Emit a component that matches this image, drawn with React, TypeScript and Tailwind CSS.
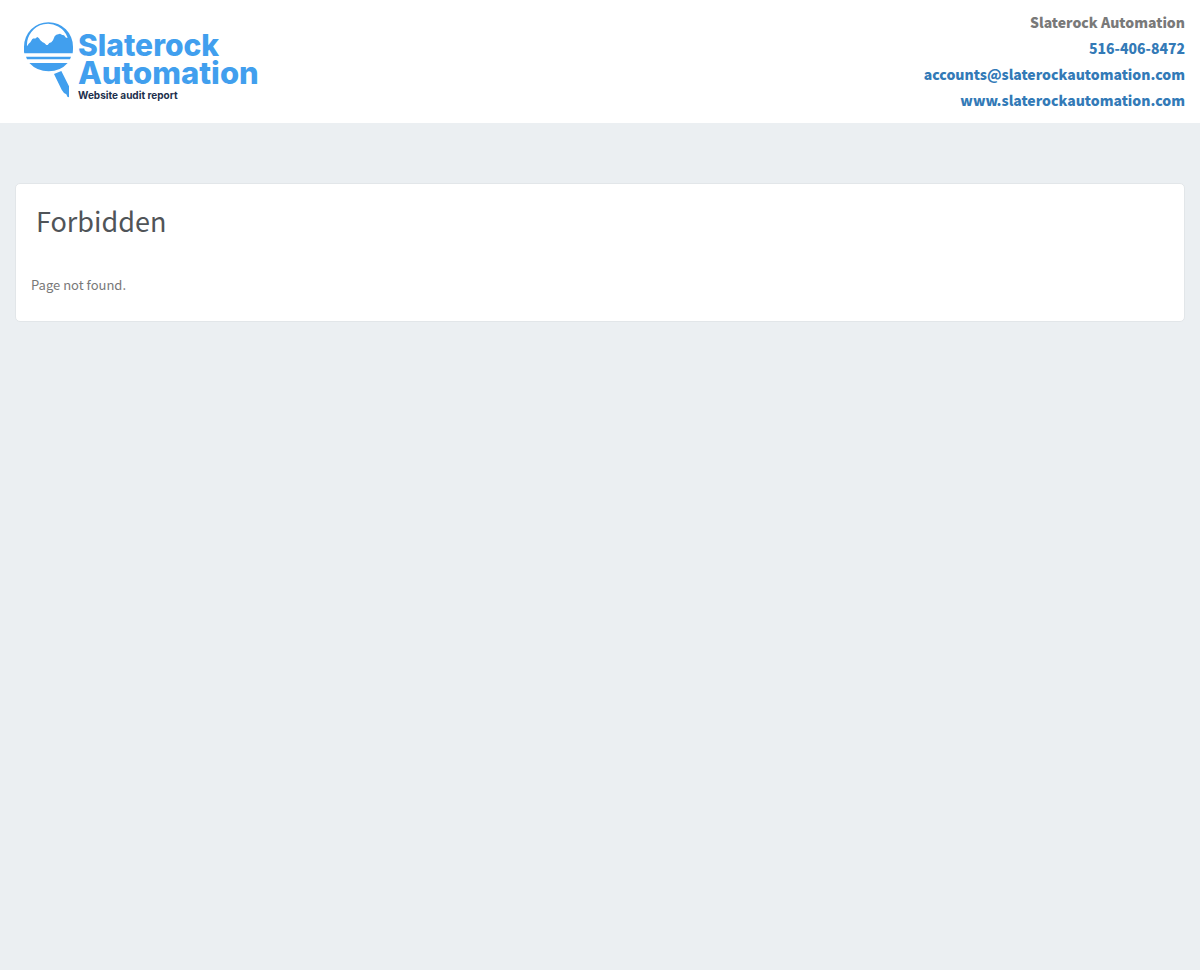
const contacts = [
  { label: "516-406-8472", href: "tel:516-406-8472" },
  {
    label: "accounts@slaterockautomation.com",
    href: "mailto:accounts@slaterockautomation.com",
  },
  {
    label: "www.slaterockautomation.com",
    href: "https://www.slaterockautomation.com",
  },
];

function LogoMark() {
  return (
    <svg
      viewBox="27 21 147 228"
      className="h-[76px] w-[49px] shrink-0 fill-[#419fee]"
      aria-hidden="true"
    >
      {/* Lens rim and mountains */}
      <path
        fillRule="evenodd"
        d="M28 115C26 108 27 103 27 95a73.500 73.500 0 0 1 147 0c0 8 0 13-1 20ZM36 94L41 86L46 82L52 72L57 70L60 71L67 66L72 70L76 76L83 82L88 84L94 90L98 90L103 84L109 82L114 76L119 64L124 59L135 56L142 60L147 61L153 68L158 68A63 63 0 0 0 36 94Z"
      />
      {/* Water lines */}
      <path d="M33 125h135l-3 8H36ZM43 144h115q-22 25-57 25t-58-25Z" />
      {/* Pencil handle */}
      <path d="m117 177 22-9 23 46v33l-5-2-3-7-7-4-7-10Z" />
    </svg>
  );
}

function Header() {
  return (
    <header className="flex items-start justify-between bg-white px-[15px] pt-[9px] pb-[10px]">
      <a href="/" className="flex gap-[5px] pt-[13px] pl-[9px]">
        <LogoMark />
        <span className="pt-[9px] font-['Inter',sans-serif]">
          <span className="block text-[30px] leading-[28px] font-extrabold text-[#419fee]">
            Slaterock
          </span>
          <span className="block text-[31px] leading-[28px] font-extrabold text-[#419fee]">
            Automation
          </span>
          <span className="block text-[10px] leading-4 font-bold text-[#1d2f4d]">
            Website audit report
          </span>
        </span>
      </a>

      <address className="text-right text-[14px] leading-[26px] font-black not-italic">
        <p>Slaterock Automation</p>
        {contacts.map((contact) => (
          <a
            key={contact.label}
            href={contact.href}
            className="block text-[#337ab7] hover:underline"
          >
            {contact.label}
          </a>
        ))}
      </address>
    </header>
  );
}

export default function App() {
  return (
    <div className="min-h-screen bg-[#ebeff2] font-['Noto_Sans_CJK_SC',sans-serif] text-[#797979]">
      <Header />

      <main className="px-[15px] pt-[60px]">
        <section className="rounded-[5px] border border-[#e2e6e9] bg-white px-[15px] pt-[21px] pb-[26px]">
          <h1 className="mb-[38px] px-[5px] text-[27px] leading-8 text-[#505458]">
            Forbidden
          </h1>
          <p className="text-[13px] leading-5">Page not found.</p>
        </section>
      </main>
    </div>
  );
}
